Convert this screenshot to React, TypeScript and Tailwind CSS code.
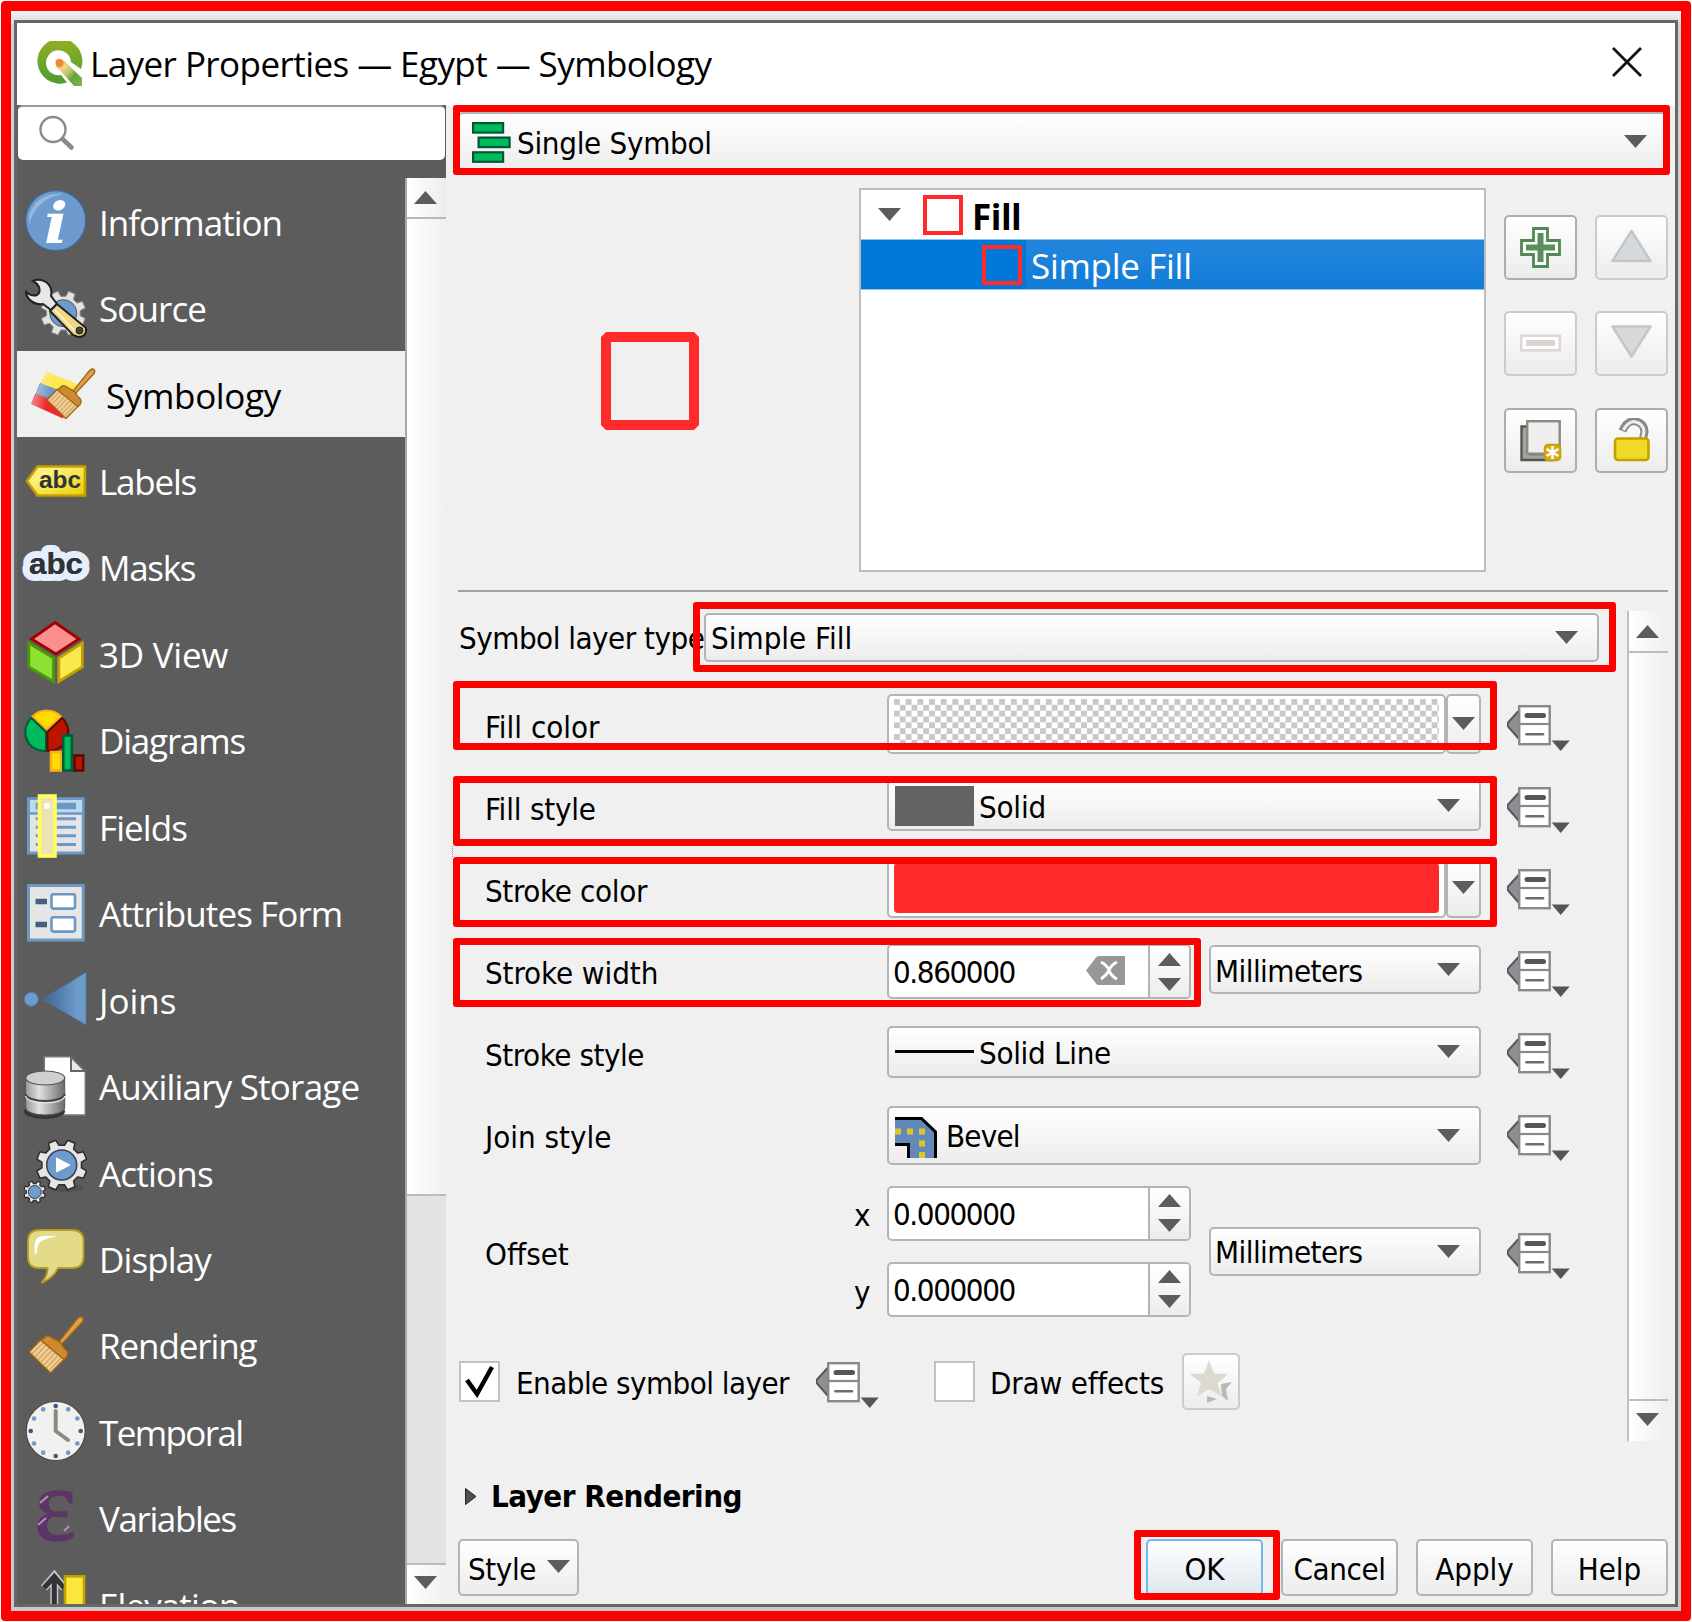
import React from "react";

const UI = "font-['DejaVu_Sans_Condensed','DejaVu_Sans',sans-serif] text-[31px] leading-none";
const SEGOE = "font-['Open_Sans','Noto_Sans',sans-serif] text-[35px] leading-none";
const FACE = "bg-gradient-to-b from-white to-[#ececec] border-2 border-[#b4b4b4] rounded-[5px]";

function gear(cx: number, cy: number, outer: number, inner: number, teeth: number) {
  const pts: string[] = [];
  const step = (Math.PI * 2) / teeth;
  for (let i = 0; i < teeth; i++) {
    const a = i * step + step / 2;
    [
      [inner, -0.31],
      [outer, -0.2],
      [outer, 0.2],
      [inner, 0.31],
    ].forEach(([r, k]) => {
      pts.push(`${(cx + r * Math.cos(a + k * step)).toFixed(2)},${(cy + r * Math.sin(a + k * step)).toFixed(2)}`);
    });
  }
  return pts.join(" ");
}

function Down({ className = "" }: { className?: string }) {
  return (
    <svg className={`h-[13px] w-[23px] shrink-0 ${className}`} viewBox="0 0 23 13">
      <path d="M0 0H23L11.5 13Z" fill="#5c5c5c" />
    </svg>
  );
}

function Up({ className = "" }: { className?: string }) {
  return (
    <svg className={`h-[13px] w-[23px] shrink-0 ${className}`} viewBox="0 0 23 13">
      <path d="M0 13H23L11.5 0Z" fill="#5c5c5c" />
    </svg>
  );
}

function Override({ className = "" }: { className?: string }) {
  return (
    <svg className={`h-[47px] w-[64px] shrink-0 ${className}`} viewBox="0 0 64 47">
      <path d="M12 5.5L1 17.5Q0 19.5 1 21.5L12 34Z" fill="#8c8f93" stroke="#55575a" strokeWidth="2" />
      <rect x="12.2" y="1.2" width="30.5" height="38" fill="#fff" stroke="#888a85" strokeWidth="2.4" />
      <path d="M12 19H43" stroke="#888a85" strokeWidth="2.2" />
      <path d="M20 10.5H36.5" stroke="#555753" strokeWidth="5" strokeLinecap="round" />
      <path d="M19.5 29.2H36" stroke="#6c6e6a" strokeWidth="2.6" strokeLinecap="round" />
      <path d="M44.7 35.5H62.7L53.7 46Z" fill="#555" />
    </svg>
  );
}

function Brush() {
  return (
    <g>
      <path d="M35 32L55 7Q58 3.500 60.500 5.500Q62.500 8 59.500 11L39 33Z" fill="#dda04a" stroke="#9c6414" strokeWidth="1.5" />
      <path d="M22 26Q25 22 29 25L36 29L39 31Q41 36 45 39Q47 42 44 46L41 48L18 29Z" fill="#d08a2e" stroke="#9c6414" strokeWidth="1.5" />
      <path d="M18.500 28L42 47.500L28.500 61L7 40Z" fill="#efcb92" stroke="#9c6414" strokeWidth="1.500" />
      <path d="M21 31L10 42M24 33L13 45M27 36L16 48M30 38.500L18.500 50.500M33 41L21.500 53.500M36 43.500L24 56M39 46L27 58.500" stroke="#c08c48" strokeWidth="1" />
    </g>
  );
}

const dots = Array.from({ length: 12 }, (_, i) => ({
  x: 33.7 + 25 * Math.sin((i * Math.PI) / 6),
  y: 33 - 25 * Math.cos((i * Math.PI) / 6),
  main: i % 3 === 0,
}));

const icons: Record<string, React.ReactNode> = {
  Information: (
    <>
      <circle cx="33.7" cy="32.6" r="30" fill="#6d9bd0" stroke="#41699c" strokeWidth="1.2" />
      <path d="M7 37C5 16 22 4 41 6C24 9 12 18 7 37Z" fill="#a3c0e2" opacity=".8" />
      <text x="22" y="54.500" fontFamily="'DejaVu Serif', serif" fontStyle="italic" fontWeight="700" fontSize="56" textLength="24" lengthAdjust="spacingAndGlyphs" fill="#fff">i</text>
    </>
  ),
  Source: (
    <>
      <polygon points={gear(41.3, 38.2, 22.5, 17, 8)} fill="#e2e2e2" stroke="#8a8a8a" strokeWidth="1" />
      <circle cx="41.3" cy="38.2" r="13.500" fill="#6d9bd0" stroke="#555" strokeWidth="1" />
      <path d="M11 6Q17 3 24 7Q31 12 29 21L35 29L29 35L21 29Q12 30 7 24Q4 21 4 17Q10 22 15 20Q19 17 17 12Q15 8 11 6Z" fill="#e6e8e8" stroke="#222" strokeWidth="2" />
      <path d="M28 36L35 29L64 53Q65 62 56 62L51 60Z" fill="#edd886" stroke="#222" strokeWidth="2" />
      <path d="M33 35L53 56" stroke="#fbf0c0" strokeWidth="2" />
      <circle cx="57.500" cy="55.500" r="3.500" fill="#444" stroke="#222" />
    </>
  ),
  Symbology: (
    <>
      <defs>
        <linearGradient id="fade" x1="0" y1="0" x2="1" y2="0.3">
          <stop offset="0" stopColor="#f0f0f0" stopOpacity=".75" />
          <stop offset=".5" stopColor="#f0f0f0" stopOpacity="0" />
        </linearGradient>
      </defs>
      <path d="M24.700 10.700L55 23L48 39L18 23Z" fill="#fce94f" />
      <path d="M18 22L50 34L44 46L13.500 33Z" fill="#6d97c8" />
      <path d="M13.500 32.500L46 45L41 57.500L9 43Z" fill="#ef2929" />
      <path d="M24.700 10.700L55 23L41 57.500L9 43Z" fill="url(#fade)" />
      <g transform="translate(18.800 3.800) scale(.88)"><Brush /></g>
    </>
  ),
  Labels: (
    <>
      <defs>
        <linearGradient id="tag" x1="0" y1="0" x2="1" y2="1">
          <stop offset=".3" stopColor="#fdf07c" />
          <stop offset="1" stopColor="#e9d000" />
        </linearGradient>
      </defs>
      <path d="M5 33L15.500 18.500H63V47.500H15.500Z" fill="url(#tag)" stroke="#c4a000" strokeWidth="2.600" />
      <text x="17" y="39.600" fontFamily="'Liberation Sans', sans-serif" fontWeight="700" fontSize="23" textLength="42" lengthAdjust="spacingAndGlyphs" fill="#2e3436">abc</text>
    </>
  ),
  Masks: (
    <>
      <text x="7" y="39.800" fontFamily="'Liberation Sans', sans-serif" fontWeight="700" fontSize="29.500" textLength="54" lengthAdjust="spacingAndGlyphs" fill="#2e3436" stroke="#e6edfd" strokeWidth="14" strokeLinejoin="round" paintOrder="stroke">abc</text>
      <text x="7" y="39.800" fontFamily="'Liberation Sans', sans-serif" fontWeight="700" fontSize="29.500" textLength="54" lengthAdjust="spacingAndGlyphs" fill="#2e3436" aria-hidden="true">abc</text>
    </>
  ),
  "3D View": (
    <>
      <path d="M33 2.500L57 19L34 34L9.500 19Z" fill="#f98f8f" stroke="#a40000" strokeWidth="2.800" />
      <path d="M6.800 23L31.500 38V61.500L6.800 47Z" fill="#8ae234" stroke="#4e9a06" strokeWidth="2.800" />
      <path d="M60.300 23L36.800 38V61.500L60.300 47Z" fill="#fce94f" stroke="#c4a000" strokeWidth="2.800" />
    </>
  ),
  Diagrams: (
    <>
      <path d="M24.700 22.500L10.500 9.500A20 20 0 0 1 39 9.500Z" fill="#ffdd00" stroke="#fbad17" strokeWidth="2" />
      <path d="M24 25L9.500 11A19 19 0 0 0 24 44Z" fill="#00bb5c" stroke="#005c3a" strokeWidth="2" />
      <path d="M25.500 25L40 11A19 19 0 0 1 25.500 44Z" fill="#bb1400" stroke="#5e0a00" strokeWidth="2" />
      <rect x="29" y="45" width="10" height="18.500" fill="#ffdd00" stroke="#fbad17" strokeWidth="2.600" />
      <rect x="41.300" y="28.500" width="8.500" height="35" fill="#00bb5c" stroke="#005c3a" strokeWidth="2.600" />
      <rect x="52.500" y="48.500" width="8.700" height="15" fill="#bb1400" stroke="#5e0a00" strokeWidth="2.600" />
    </>
  ),
  Fields: (
    <>
      <rect x="6.500" y="5.700" width="54.700" height="54.300" fill="#e4e4e4" stroke="#6d97c4" strokeWidth="3" />
      <rect x="8" y="7" width="52" height="12.500" fill="#bcd9ee" />
      <path d="M6 20.500H62" stroke="#6d97c4" strokeWidth="2.500" />
      <path d="M13.700 13H54" stroke="#6d97c4" strokeWidth="6.500" />
      <path d="M13.700 25.800H54M13.700 34.200H54M13.700 42.800H54M13.700 51.500H54" stroke="#6d97c4" strokeWidth="3" />
      <rect x="17.500" y="3" width="15.500" height="60" fill="#ece3b2" stroke="#ffff5c" strokeWidth="3.600" />
      <rect x="22.300" y="10.200" width="5.500" height="5.500" fill="#fff" />
    </>
  ),
  "Attributes Form": (
    <>
      <rect x="6.500" y="5.500" width="54.700" height="54.500" fill="#e6e6e6" stroke="#6d97c4" strokeWidth="3" />
      <rect x="29.500" y="14.300" width="23.500" height="14.300" rx="2" fill="#fff" stroke="#6d97c4" strokeWidth="2.600" />
      <rect x="29.500" y="37.300" width="23.500" height="14.300" rx="2" fill="#fff" stroke="#6d97c4" strokeWidth="2.600" />
      <path d="M13.500 21.500H25M13.500 44.500H25" stroke="#45607c" strokeWidth="5.500" />
    </>
  ),
  Joins: (
    <>
      <defs>
        <linearGradient id="join">
          <stop offset="0" stopColor="#3b648f" />
          <stop offset=".8" stopColor="#6d9bcb" />
        </linearGradient>
      </defs>
      <circle cx="9.300" cy="33.300" r="7" fill="#6d9bcb" stroke="#4a78a8" />
      <path d="M20.700 33.300L64 6.300V59Z" fill="url(#join)" stroke="#4a78a8" strokeWidth=".8" />
    </>
  ),
  "Auxiliary Storage": (
    <>
      <defs>
        <linearGradient id="cyl">
          <stop offset="0" stopColor="#9a9a9a" />
          <stop offset=".35" stopColor="#e0e0e0" />
          <stop offset="1" stopColor="#6b6b6b" />
        </linearGradient>
      </defs>
      <path d="M22.300 3.800H49L63.300 18V62H22.300Z" fill="#fff" stroke="#777" strokeWidth="1.500" />
      <path d="M49 3.800V18H63.300Z" fill="#e8e8e8" stroke="#666" strokeWidth="2" />
      <ellipse cx="22.500" cy="58.500" rx="20.500" ry="7.500" fill="#353838" />
      <path d="M3.700 25V55A19.500 7 0 0 0 42.700 55V25Z" fill="url(#cyl)" stroke="#555" strokeWidth="1" />
      <path d="M3.700 41A19.500 7 0 0 0 42.700 41" fill="none" stroke="#444" strokeWidth="2" />
      <path d="M3.700 43A19.500 7 0 0 0 42.700 43" fill="none" stroke="#eee" strokeWidth="1.200" />
      <ellipse cx="23.200" cy="25" rx="19.500" ry="7" fill="#cfcfcf" stroke="#555" strokeWidth="1.200" />
    </>
  ),
  Actions: (
    <>
      <ellipse cx="44" cy="49" rx="18" ry="4" fill="#3c3c3c" opacity=".35" />
      <polygon points={gear(39.7, 26, 25.5, 20, 8)} fill="#e6e6e6" stroke="#2c2c2c" strokeWidth="1.500" strokeLinejoin="round" />
      <circle cx="39.700" cy="26" r="15" fill="#6d9bcb" stroke="#36414d" strokeWidth="1.500" />
      <path d="M34.500 19L48 26L34.500 33Z" fill="#fff" stroke="#fff" strokeWidth="1" strokeLinejoin="round" />
      <polygon points={gear(12.7, 53, 11, 8.5, 8)} fill="#e6e6e6" stroke="#2c2c2c" strokeWidth="1.200" />
      <circle cx="12.700" cy="53" r="6.500" fill="#6d9bcb" stroke="#36414d" strokeWidth="1" />
    </>
  ),
  Display: (
    <>
      <path d="M18 5H50Q61.500 5 61.500 16V32Q61.500 43 50 43H36Q32 52 19.500 58Q26 50 25.500 43H17Q6 43 6 32V16Q6 5 18 5Z" fill="#e4db8a" stroke="#b89e1e" strokeWidth="1.800" />
      <path d="M13 29Q10 11 22 11H35Q22 14 18 17Q15 20 15 28Z" fill="#fff" />
    </>
  ),
  Rendering: <Brush />,
  Temporal: (
    <>
      <circle cx="33.700" cy="33" r="29.500" fill="#f1f1ef" stroke="#4a4a4a" strokeWidth="1.200" />
      {dots.map((d, i) => (
        <circle key={i} cx={d.x} cy={d.y} r="2.300" fill={d.main ? "#3d5a7d" : "#6d9bcb"} />
      ))}
      <path d="M33.700 13V33L46 42" fill="none" stroke="#888a85" strokeWidth="4" strokeLinecap="round" strokeLinejoin="round" />
    </>
  ),
  Variables: (
    <>
      <text x="12" y="55" fontFamily="'Liberation Serif', serif" fontSize="104" textLength="42" lengthAdjust="spacingAndGlyphs" fill="#5c3566" stroke="#5c3566" strokeWidth="1.500">ε</text>
      <path d="M18 18L26 11M16 40L24 33M42 46L47 41" stroke="#ad8fb5" strokeWidth="2.200" />
    </>
  ),
  Elevation: (
    <>
      <path d="M32.300 34V8M22 17L32.300 5L42 17" fill="none" stroke="#c4c4c4" strokeWidth="8" />
      <path d="M32.300 34V8M22 17L32.300 5.500L42 17" fill="none" stroke="#2e3436" strokeWidth="5" />
      <rect x="43" y="5.300" width="19" height="40" fill="#fbe73c" stroke="#c4a000" strokeWidth="2.600" />
    </>
  ),
};

const tracking: Record<string, string> = {
  Information: "tracking-[-1px]",
  Symbology: "tracking-[-0.35px]",
  Labels: "tracking-[-1.2px]",
  Masks: "tracking-[-1.3px]",
  "3D View": "tracking-[-0.25px]",
  Diagrams: "tracking-[-1.2px]",
  Joins: "tracking-[0px]",
  "Auxiliary Storage": "tracking-[-0.8px]",
  Actions: "tracking-[-0.8px]",
  Rendering: "tracking-[-1.1px]",
  Temporal: "tracking-[-1.6px]",
  Variables: "tracking-[-1.4px]",
};

function Logo() {
  return (
    <svg className="ml-[19px] h-[46px] w-[47px] shrink-0" viewBox="0 0 47 46">
      <defs>
        <linearGradient id="q" x1="0" y1="0" x2="0" y2="1">
          <stop offset="0" stopColor="#93b023" />
          <stop offset="1" stopColor="#4f9a33" />
        </linearGradient>
        <linearGradient id="tail" x1="0" y1="0" x2="1" y2="1">
          <stop offset="0" stopColor="#ee7913" />
          <stop offset=".3" stopColor="#f3d78c" />
          <stop offset=".5" stopColor="#b9c46a" />
          <stop offset=".65" stopColor="#6aa536" />
          <stop offset="1" stopColor="#7db45a" />
        </linearGradient>
      </defs>
      <path d="M31 41.500A22.500 22.500 0 1 1 45 28L35 21A12.500 12.500 0 1 0 25 34Z" fill="url(#q)" />
      <path d="M19.500 20.500Q20 17.500 23.500 17.500L29 20L46.500 37V45.500H38L24 30L19.500 25Z" fill="url(#tail)" stroke="#fff" strokeWidth="1" />
      <circle cx="23.500" cy="22" r="4" fill="#ee7f2e" opacity=".8" />
    </svg>
  );
}

function Sidebar() {
  return (
    <aside className="flex w-[429px] shrink-0 flex-col bg-[#5c5c5c]">
      <div className="mx-px flex h-[55px] shrink-0 items-center rounded-[5px] border-t-2 border-[#9a9a9a] bg-white">
        <svg className="mb-[2px] ml-[20px] h-[38px] w-[38px]" viewBox="0 0 38 38">
          <circle cx="15" cy="15.500" r="12.500" fill="#fff" stroke="#8a8a8a" strokeWidth="2.400" />
          <path d="M24.500 25L33.500 33.500" stroke="#8a8a8a" strokeWidth="4.500" strokeLinecap="round" />
        </svg>
      </div>
      <div className="mt-[18px] flex min-h-0 flex-1">
        <nav className="flex h-full w-[388px] shrink-0 flex-col overflow-hidden">
          {Object.keys(icons).map((name) => {
            const on = name === "Symbology";
            return (
              <div key={name} className={`flex h-[86.45px] shrink-0 items-center pl-[5px] ${on ? "bg-[#f0f0f0]" : ""}`}>
                <svg className="h-[66px] w-[66px] shrink-0 overflow-visible" viewBox="0 0 66 66">
                  {icons[name]}
                </svg>
                <span className={`${SEGOE} whitespace-nowrap pt-[2px] ${tracking[name] ?? "tracking-[-0.9px]"} ${on ? "pl-[18px] text-black" : "pl-[11px] text-white"}`}>{name}</span>
              </div>
            );
          })}
        </nav>
        <div className="flex w-[41px] flex-col border-l-2 border-[#a8a8a8] bg-[#e3e3e3]">
          <div className="flex h-[41px] items-start justify-center border-b-2 border-[#b8b8b8] bg-gradient-to-r from-white to-[#ededed] pr-[2px] pt-[13px]">
            <Up />
          </div>
          <div className="h-[977px] border-b-2 border-[#bcbcbc] bg-gradient-to-r from-white to-[#f0f0f0]" />
          <div className="flex-1" />
          <div className="flex h-[41px] items-start justify-center border-t-2 border-[#bcbcbc] bg-gradient-to-r from-white to-[#f0f0f0] pr-[2px] pt-[11px]">
            <Down />
          </div>
        </div>
      </div>
    </aside>
  );
}

function ToolButton({ dim, children }: { dim?: boolean; children: React.ReactNode }) {
  return (
    <div className={`flex h-[65px] w-[73px] items-center justify-center rounded-[5px] border-2 bg-gradient-to-b from-white to-[#ececec] ${dim ? "border-[#cbcbcb]" : "border-[#adadad]"}`}>
      <svg className="h-[45px] w-[45px]" viewBox="0 0 45 45">
        {children}
      </svg>
    </div>
  );
}

function Combo({ className = "", arrow = "mr-[19px]", children }: { className?: string; arrow?: string; children: React.ReactNode }) {
  return (
    <div className={`flex items-center ${FACE} ${className}`}>
      {children}
      <Down className={`ml-auto ${arrow}`} />
    </div>
  );
}

function Spin({ value, clear, className = "" }: { value: string; clear?: boolean; className?: string }) {
  return (
    <div className={`flex h-[55px] w-[304px] shrink-0 overflow-hidden rounded-[5px] border-2 border-[#b4b4b4] bg-white ${className}`}>
      <div className="flex flex-1 items-center pl-[4px] pt-[2px]">
        <span className="tracking-[-1.4px]">{value}</span>
        {clear && (
          <svg className="mb-[4px] ml-auto mr-[23px] h-[29px] w-[39px]" viewBox="0 0 39 29">
            <path d="M0 14.500L10 1.500Q11 0 13 0H39V29H13Q11 29 10 27.500Z" fill="#979797" />
            <path d="M15 6Q22 10 23 14.500Q25 20 31 23M31 6Q25 9 23 14.500Q20 20 15 23" fill="none" stroke="#fff" strokeWidth="3" />
          </svg>
        )}
      </div>
      <div className="flex w-[41px] flex-col items-center justify-center gap-[12px] border-l-2 border-[#b4b4b4] bg-gradient-to-b from-white to-[#ececec]">
        <Up />
        <Down />
      </div>
    </div>
  );
}

function ColorButton({ children }: { children: React.ReactNode }) {
  return (
    <div className="flex">
      <div className="h-[60px] w-[559px] rounded-[5px] border-2 border-[#b4b4b4] bg-white px-[5px] py-[3px]">{children}</div>
      <div className={`flex h-[60px] w-[35px] items-center justify-center ${FACE}`}>
        <Down />
      </div>
    </div>
  );
}

function Row({ label, children, tracking = "" }: { label: string; children: React.ReactNode; tracking?: string }) {
  return (
    <div className="flex h-[82.1px] shrink-0 items-center">
      <span className={`w-[405px] shrink-0 whitespace-nowrap pl-[3px] pt-[2px] ${tracking}`}>{label}</span>
      <div className="mb-[5px] flex w-[594px] shrink-0 items-center">{children}</div>
      <Override className="ml-[26px] mt-[4px]" />
    </div>
  );
}

function Check({ on }: { on?: boolean }) {
  return (
    <div className="flex h-[41px] w-[41px] shrink-0 items-center justify-center border-2 border-[#c2c2c2] bg-white">
      {on && (
        <svg className="h-[33px] w-[29px]" viewBox="0 0 29 33">
          <path d="M2 15L12 29L27 2" fill="none" stroke="#000" strokeWidth="4.500" />
        </svg>
      )}
    </div>
  );
}

function Form() {
  return (
    <div className={`flex w-[1181px] shrink-0 flex-col text-black ${UI}`}>
      <div className="flex h-[93px] shrink-0 items-start pt-[21px]">
        <span className="flex h-[50px] w-[258px] shrink-0 items-center whitespace-nowrap pl-[13px] pt-px tracking-[-0.5px]">Symbol layer type</span>
        <Combo className="h-[49px] w-[895px]">
          <span className="pl-[5px] pt-[2px]">Simple Fill</span>
        </Combo>
      </div>
      <div className="flex flex-col pl-[36px]">
        <Row label="Fill color">
          <ColorButton>
            <div className="h-full bg-[repeating-conic-gradient(#fff_0_25%,#c8c8c8_0_50%)] bg-[length:11.7px_11.7px]" />
          </ColorButton>
        </Row>
        <Row label="Fill style" tracking="tracking-[-0.2px]">
          <Combo className="h-[51px] w-full">
            <div className="ml-[6px] h-[40px] w-[79px] bg-[#636363]" />
            <span className="pl-[5px] pt-[3px] tracking-[-0.2px]">Solid</span>
          </Combo>
        </Row>
        <Row label="Stroke color" tracking="tracking-[-0.35px]">
          <ColorButton>
            <div className="h-full rounded-[4px] bg-[#ff2a2a]" />
          </ColorButton>
        </Row>
        <Row label="Stroke width" tracking="tracking-[-0.1px]">
          <Spin value="0.860000" clear className="mt-[4px]" />
          <Combo className="ml-[18px] h-[49px] w-[272px]">
            <span className="pl-[4px] pt-[3px] tracking-[-0.55px]">Millimeters</span>
          </Combo>
        </Row>
        <Row label="Stroke style" tracking="tracking-[-0.45px]">
          <Combo className="h-[52px] w-full">
            <div className="ml-[6px] h-[3px] w-[79px] bg-black" />
            <span className="pl-[5px] pt-[3px] tracking-[-0.3px]">Solid Line</span>
          </Combo>
        </Row>
        <Row label="Join style">
          <Combo className="mt-[2px] h-[59px] w-full">
            <svg className="ml-[6px] mt-[5px] h-[41px] w-[42px]" viewBox="0 0 42 41">
              <path d="M0 1.500H26.500L40.500 15V41H14V27H0Z" fill="#6389ba" />
              <path d="M0 1.500H26.500L40.500 15V41M0 27.500H13.500V41" fill="none" stroke="#000" strokeWidth="3" />
              <path d="M0 14.500H6M12 14.500H18M24 14.500H30M24 26.500H30M24 38H30" stroke="#dbc52c" strokeWidth="6" />
            </svg>
            <span className="pl-[9px] pt-[3px] tracking-[-0.8px]">Bevel</span>
          </Combo>
        </Row>
        <div className="flex h-[161px] shrink-0 items-start pt-[8px]">
          <span className="w-[368px] shrink-0 pl-[3px] pt-[53px]">Offset</span>
          <div className="flex flex-col gap-[21px]">
            <div className="flex items-center">
              <span className="w-[37px] pl-1 pt-[4px]">x</span>
              <Spin value="0.000000" />
            </div>
            <div className="flex items-center">
              <span className="w-[37px] pl-1 pt-[6px]">y</span>
              <Spin value="0.000000" />
            </div>
          </div>
          <Combo className="ml-[18px] mt-[41px] h-[49px] w-[272px]">
            <span className="pl-[4px] pt-[3px] tracking-[-0.55px]">Millimeters</span>
          </Combo>
          <Override className="ml-[26px] mt-[47px]" />
        </div>
      </div>
      <div className="flex h-[84px] shrink-0 items-center pl-[13px] pt-[2px]">
        <Check on />
        <span className="w-[316px] whitespace-nowrap pl-[16px] pt-[3px] tracking-[-0.55px]">Enable symbol layer</span>
        <Override className="mr-[54px] mt-[7px]" />
        <Check />
        <span className="w-[207px] whitespace-nowrap pl-[15px] pt-[3px] tracking-[-0.2px]">Draw effects</span>
        <div className="flex h-[57px] w-[58px] items-center justify-center rounded-[5px] border-2 border-[#cbcbcb] bg-gradient-to-b from-white to-[#ececec]">
          <svg className="h-[43px] w-[43px]" viewBox="0 0 43 43">
            <path d="M31 24L42 22L36 29L38 41L32 36ZM17 36L27 39L17 43Z" fill="#b9b9b9" />
            <path d="M19 0L24 13.500L38 14L27.500 23L31.500 36.500L19 29L7 36.500L11 23L0 14L14 13.500Z" fill="#dcd9d0" />
          </svg>
        </div>
      </div>
    </div>
  );
}

function PushButton({ children, primary, className = "" }: { children: React.ReactNode; primary?: boolean; className?: string }) {
  return (
    <div
      className={`flex h-[57px] w-[117px] items-center justify-center rounded-[5px] border-2 bg-gradient-to-b from-white pt-[3px] ${
        primary ? "border-[#6fb9f0] to-[#dfe6ee]" : "border-[#b4b4b4] to-[#ececec]"
      } ${className}`}
    >
      {children}
    </div>
  );
}

function Swatch({ className = "" }: { className?: string }) {
  return <div className={`h-[40px] w-[40px] shrink-0 border-[4px] border-[#ff2a2a] ${className}`} />;
}

function SymbolTree() {
  return (
    <div className={`mt-[14px] h-[384px] w-[627px] shrink-0 border-2 border-[#bdbdbd] bg-white ${SEGOE}`}>
      <div className="flex h-[49px] items-center">
        <Down className="ml-[17px]" />
        <Swatch className="ml-[22px] mt-px" />
        <span className="pl-[9px] pt-[3px] font-bold tracking-[-0.5px]">Fill</span>
      </div>
      <div className="flex h-[51px] items-center border-y border-[#8cc4f2] bg-[#0078d7]">
        <Swatch className="ml-[121px]" />
        <div className="ml-[4px] flex h-full flex-1 items-center bg-gradient-to-b from-[#2386dc] to-[#117cd8] pl-[5px] pt-[2px] tracking-[-0.3px] text-white">Simple Fill</div>
      </div>
    </div>
  );
}

function MainPanel() {
  return (
    <main className="flex flex-1 flex-col bg-[#f0f0f0]">
      <Combo arrow="mr-[19px] mb-[4px]" className={`ml-[12px] mr-[7px] mt-[7px] h-[62px] shrink-0 ${UI}`}>
        <svg className="mb-[2px] ml-[12px] h-[41px] w-[39px]" viewBox="0 0 39 41">
          <g fill="#00bb5c" stroke="#00563a" strokeWidth="2.200">
            <rect x="1.100" y="1.100" width="30" height="9.500" />
            <rect x="6.600" y="15.600" width="31" height="9.500" />
            <rect x="1.100" y="30.300" width="30" height="9.500" />
          </g>
        </svg>
        <span className="pl-[6px] tracking-[-0.3px]">Single Symbol</span>
      </Combo>
      <div className="flex h-[416px] shrink-0">
        <div className="w-[413px] shrink-0 pl-[155px] pt-[158px]">
          <svg className="h-[98px] w-[98px]" viewBox="0 0 98 98">
            <path d="M5 0H93L98 5V93L93 98H5L0 93V5ZM10 10V88H88V10Z" fill="#ff2a2a" fillRule="evenodd" />
          </svg>
        </div>
        <SymbolTree />
        <div className="ml-[18px] mt-[40.5px] grid h-max grid-cols-[73px_73px] gap-x-[18px] gap-y-[31.5px]">
          <ToolButton>
            <path d="M15.500 3.500H29.500V15.500H41.500V29.500H29.500V41.500H15.500V29.500H3.500V15.500H15.500Z" fill="#fff" stroke="#4f8a51" strokeWidth="2.800" />
            <path d="M22.500 8V37M8 22.500H37" stroke="#5a8f5c" strokeWidth="6" />
          </ToolButton>
          <ToolButton dim>
            <path d="M22.500 6L41.500 36H3.500Z" fill="#d5d9dc" stroke="#c3c5c6" strokeWidth="2.500" strokeLinejoin="round" />
          </ToolButton>
          <ToolButton dim>
            <rect x="3.200" y="14.700" width="38.600" height="14.600" fill="#fff" stroke="#e2d5d5" strokeWidth="2.600" />
            <path d="M8 22H37" stroke="#ddd3d3" strokeWidth="6" />
          </ToolButton>
          <ToolButton dim>
            <path d="M22.500 35.500L41.500 5.500H3.500Z" fill="#d5d9dc" stroke="#c3c5c6" strokeWidth="2.500" strokeLinejoin="round" />
          </ToolButton>
          <ToolButton>
            <path d="M3.500 8.500H12V36H35V42H3.500Z" fill="#a3a498" stroke="#555753" strokeWidth="2.400" />
            <rect x="9.200" y="3.200" width="32.500" height="32.500" fill="#eeeeec" stroke="#888a85" strokeWidth="2.400" />
            <rect x="26.500" y="26.500" width="16" height="16" rx="3.500" fill="#d3ab15" stroke="#c4a000" strokeWidth="1.500" />
            <path d="M34.500 28V41M28.500 31L40.500 38M40.500 31L28.500 38" stroke="#fff" strokeWidth="2.600" />
          </ToolButton>
          <ToolButton>
            <path d="M13.500 13Q17 3.500 25 3Q35.500 4.500 35.500 14Q35 19 32 25" fill="none" stroke="#888a85" strokeWidth="8" />
            <path d="M14.500 12Q18 4.500 25 3.500Q35 5.500 35 14Q34.500 19 31.500 25" fill="none" stroke="#eeeeec" strokeWidth="3.200" />
            <rect x="6" y="20.500" width="33.500" height="21.500" rx="3" fill="#f0da27" stroke="#c4a000" strokeWidth="2.600" />
          </ToolButton>
        </div>
      </div>
      <div className="ml-[12px] mr-[7px] h-[2px] shrink-0 bg-[#a2a2a2]" />
      <div className="flex h-[849px] shrink-0">
        <Form />
        <div className="mt-[19px] flex h-[830px] w-[41px] flex-col border-l-2 border-[#c0c0c0] bg-gradient-to-r from-white to-[#eeeeee]">
          <div className="flex h-[42px] items-start justify-center border-b-2 border-[#bcbcbc] pr-[2px] pt-[14px]">
            <Up />
          </div>
          <div className="flex-1" />
          <div className="flex h-[42px] items-start justify-center border-t-2 border-[#bcbcbc] pr-[2px] pt-[12px]">
            <Down />
          </div>
        </div>
      </div>
      <div className={`flex h-[98px] shrink-0 items-center pl-[19px] pt-[13px] ${UI}`}>
        <svg className="h-[17px] w-[12px]" viewBox="0 0 12 17">
          <path d="M0.500 0.500L11 8.500L0.500 16.500Z" fill="#505050" stroke="#222" strokeWidth="1" />
        </svg>
        <span className="pl-[14px] font-bold tracking-[-0.5px]">Layer Rendering</span>
      </div>
      <div className={`flex h-[57px] shrink-0 items-center pl-[12px] pr-[7px] ${UI}`}>
        <div className={`flex h-[57px] w-[121px] items-center pl-[8px] pt-[3px] tracking-[-0.4px] ${FACE}`}>
          Style
          <Down className="mb-[5px] ml-auto mr-[7px]" />
        </div>
        <div className="ml-auto flex gap-[18px]">
          <PushButton primary>OK</PushButton>
          <PushButton className="tracking-[-0.4px]">Cancel</PushButton>
          <PushButton>Apply</PushButton>
          <PushButton>Help</PushButton>
        </div>
      </div>
    </main>
  );
}

const marks = [
  "left-[453px] top-[105px] h-[70px] w-[1217px]",
  "left-[693px] top-[602px] h-[70px] w-[923px]",
  "left-[453px] top-[681px] h-[69px] w-[1044px]",
  "left-[453px] top-[776px] h-[70px] w-[1044px]",
  "left-[453px] top-[857px] h-[70px] w-[1044px]",
  "left-[453px] top-[938px] h-[69px] w-[748px]",
  "left-[1134px] top-[1530px] h-[70px] w-[146px]",
];

export default function App() {
  return (
    <div className="relative h-[1622px] w-[1692px] overflow-hidden bg-white p-px">
      <div className="flex h-full rounded-[4px] border-[10px] border-[#ff0000] bg-[#d2d2d2] bg-gradient-to-b from-[#f4f4f4] via-[#d2d2d2] via-[1%] to-[#cacaca] px-[3px] pb-[4px] pt-[9px]">
        <div className="flex flex-1 flex-col border-[3px] border-[#666868] bg-white">
          <header className="flex h-[82px] shrink-0 items-center">
            <Logo />
            <h1 className={`pb-[2px] pl-[7px] tracking-[-0.57px] text-black ${SEGOE}`}>Layer Properties — Egypt — Symbology</h1>
            <svg className="mb-[5px] ml-auto mr-[33px] h-[30px] w-[30px]" viewBox="0 0 30 30">
              <path d="M1 1L29 29M29 1L1 29" stroke="#111" strokeWidth="2.800" />
            </svg>
          </header>
          <div className="flex min-h-0 flex-1">
            <Sidebar />
            <MainPanel />
          </div>
        </div>
      </div>
      <div className="absolute left-[452px] top-[846px] h-[11px] border-l border-dotted border-[#999]" />
      {marks.map((m) => (
        <div key={m} className={`absolute rounded-[3px] border-[7px] border-[#ff0000] ${m}`} />
      ))}
    </div>
  );
}
